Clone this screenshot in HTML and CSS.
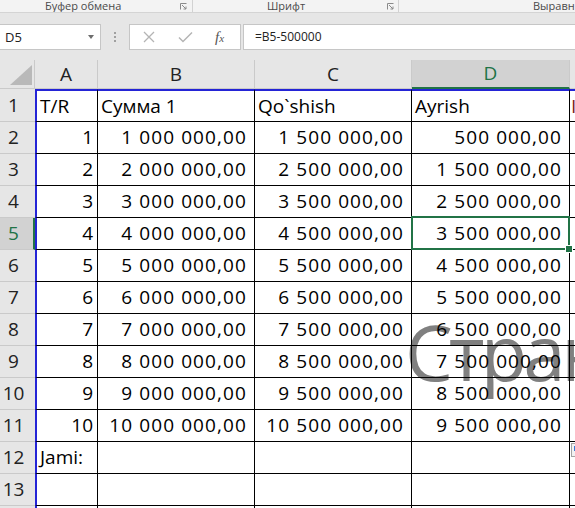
FILE: index.html
```html
<!DOCTYPE html>
<html lang="ru">
<head>
<meta charset="utf-8">
<title>Excel</title>
<link rel="stylesheet" href="styles.css">
</head>
<body>
<div class="ribbon">
  <div class="grp g1"><span class="lbl">Буфер обмена</span>
    <svg class="launch" viewBox="0 0 7 7"><path d="M0.5 6.5V0.5H6.5" fill="none" stroke="#8a8a8a" stroke-width="1"/><path d="M2 2L6 6M6 3.5V6H3.5" fill="none" stroke="#8a8a8a" stroke-width="1"/></svg>
  </div>
  <div class="grp g2"><span class="lbl">Шрифт</span>
    <svg class="launch" viewBox="0 0 7 7"><path d="M0.5 6.5V0.5H6.5" fill="none" stroke="#8a8a8a" stroke-width="1"/><path d="M2 2L6 6M6 3.5V6H3.5" fill="none" stroke="#8a8a8a" stroke-width="1"/></svg>
  </div>
  <div class="grp g3"><span class="lbl">Выравнивание</span></div>
</div>
<div class="fbar">
  <div class="namebox"><span>D5</span><span class="caret"></span></div>
  <div class="dots"><i></i><i></i><i></i></div>
  <div class="fxbox">
    <svg class="ic-x" viewBox="0 0 12 12"><path d="M1 1L11 11M11 1L1 11" stroke="#b4b4b4" stroke-width="1.3" fill="none"/></svg>
    <svg class="ic-ok" viewBox="0 0 15 12"><path d="M1 6.5L5 10.5L14 1.5" stroke="#b4b4b4" stroke-width="1.5" fill="none"/></svg>
    <span class="fx">f<small>x</small></span>
  </div>
  <div class="formula">=B5-500000</div>
</div>
<div class="sheet">
  <div class="watermark">Страница 1</div>
  <div class="paste"><i></i></div>
  <div class="grid">
    <div class="ch corner"><svg viewBox="0 0 35 28" width="35" height="28"><polygon points="10,25 32,25 32,5" fill="#b9b9b9"/></svg></div>
    <div class="ch">A</div><div class="ch">B</div><div class="ch">C</div><div class="ch sel">D</div><div class="ch last"></div>

    <div class="rh r1h">1</div><div class="c a r1">T/R</div><div class="c r1">Сумма 1</div><div class="c r1">Qo`shish</div><div class="c r1">Ayrish</div><div class="c e r1">Izoh</div>

    <div class="rh">2</div><div class="c a num">1</div><div class="c num">1 000 000,00</div><div class="c num">1 500 000,00</div><div class="c num">500 000,00</div><div class="c e"></div>
    <div class="rh">3</div><div class="c a num">2</div><div class="c num">2 000 000,00</div><div class="c num">2 500 000,00</div><div class="c num">1 500 000,00</div><div class="c e"></div>
    <div class="rh">4</div><div class="c a num">3</div><div class="c num">3 000 000,00</div><div class="c num">3 500 000,00</div><div class="c num">2 500 000,00</div><div class="c e"></div>
    <div class="rh rsel">5</div><div class="c a num">4</div><div class="c num">4 000 000,00</div><div class="c num">4 500 000,00</div><div class="c num active">3 500 000,00</div><div class="c e"></div>
    <div class="rh">6</div><div class="c a num">5</div><div class="c num">5 000 000,00</div><div class="c num">5 500 000,00</div><div class="c num">4 500 000,00</div><div class="c e"></div>
    <div class="rh">7</div><div class="c a num">6</div><div class="c num">6 000 000,00</div><div class="c num">6 500 000,00</div><div class="c num">5 500 000,00</div><div class="c e"></div>
    <div class="rh">8</div><div class="c a num">7</div><div class="c num">7 000 000,00</div><div class="c num">7 500 000,00</div><div class="c num">6 500 000,00</div><div class="c e"></div>
    <div class="rh">9</div><div class="c a num">8</div><div class="c num">8 000 000,00</div><div class="c num">8 500 000,00</div><div class="c num">7 500 000,00</div><div class="c e"></div>
    <div class="rh">10</div><div class="c a num">9</div><div class="c num">9 000 000,00</div><div class="c num">9 500 000,00</div><div class="c num">8 500 000,00</div><div class="c e"></div>
    <div class="rh">11</div><div class="c a num">10</div><div class="c num">10 000 000,00</div><div class="c num">10 500 000,00</div><div class="c num">9 500 000,00</div><div class="c e"></div>
    <div class="rh">12</div><div class="c a">Jami:</div><div class="c"></div><div class="c"></div><div class="c"></div><div class="c e"></div>
    <div class="rh">13</div><div class="c a"></div><div class="c"></div><div class="c"></div><div class="c"></div><div class="c e"></div>
    <div class="rh">14</div><div class="c a"></div><div class="c"></div><div class="c"></div><div class="c"></div><div class="c e"></div>
  </div>
</div>
</body>
</html>
```
FILE: styles.css
```css
* { box-sizing: border-box; margin: 0; padding: 0; }
html, body { width: 575px; height: 508px; overflow: hidden; }
body {
  margin: 0;
  background: #e6e6e6;
  font-family: "Open Sans", "Noto Sans", sans-serif;
  color: #000;
}

/* ribbon group labels */
.ribbon {
  display: flex;
  height: 13px;
  background: #f3f3f3;
  border-bottom: 1px solid #d4d4d4;
  font-size: 11px;
  line-height: 12px;
  color: #4a4a4a;
  white-space: nowrap;
  overflow: hidden;
}
.grp { display: flex; align-items: flex-start; height: 12px; border-right: 1px solid #d2d2d2; flex-shrink: 0; }
.g1 { width: 193px; padding-left: 45px; }
.g2 { width: 206px; padding-left: 74px; }
.g3 { flex: 1 1 auto; min-width: 0; overflow: hidden; padding-left: 134px; border-right: 0; }
.launch { width: 7px; height: 7px; margin-left: auto; margin-top: 3px; flex-shrink: 0; }
.g1 .launch { margin-right: 5px; }
.g2 .launch { margin-right: 4px; }

/* formula bar */
.fbar { display: flex; height: 47px; padding-top: 11px; }
.namebox {
  flex-shrink: 0;
  margin-left: -1px;
  width: 102px;
  height: 26px;
  background: #fff;
  border: 1px solid #c6c6c6;
  display: flex;
  align-items: center;
  padding-left: 5px;
  font-size: 13px;
  color: #222;
}
.caret {
  margin-left: auto;
  margin-right: 6px;
  border-left: 3.5px solid transparent;
  border-right: 3.5px solid transparent;
  border-top: 4px solid #6d6d6d;
}
.dots { flex-shrink: 0; width: 28px; height: 26px; display: flex; flex-direction: column; align-items: center; justify-content: center; gap: 2px; }
.dots i { display: block; width: 2px; height: 2px; background: #a0a0a0; }
.fxbox {
  flex-shrink: 0;
  width: 112px;
  height: 26px;
  background: #fff;
  border: 1px solid #c6c6c6;
  display: flex;
  align-items: center;
}
.ic-x { width: 12px; height: 12px; margin-left: 13px; }
.ic-ok { width: 15px; height: 12px; margin-left: 23px; }
.fx {
  margin-left: 22px;
  font-family: "Liberation Serif", "DejaVu Serif", serif;
  font-style: italic;
  font-size: 15px;
  color: #555;
  line-height: 1;
}
.fx small { font-size: 11px; }
.formula {
  flex: 1;
  margin-left: 2px;
  margin-right: -2px;
  height: 26px;
  background: #fff;
  border: 1px solid #c6c6c6;
  padding-left: 11px;
  font-size: 12px;
  line-height: 24px;
  color: #222;
}

/* sheet */
.sheet { position: relative; height: 448px; background: #fff; overflow: hidden; }
.watermark {
  position: absolute;
  z-index: 0;
  left: 405px;
  top: 254px;
  font-size: 76px;
  line-height: 1;
  letter-spacing: -4px;
  color: #808080;
  white-space: nowrap;
}
.paste {
  position: absolute;
  z-index: 3;
  left: 571px;
  top: 383px;
  width: 12px;
  height: 14px;
  border: 1px solid #a4a4a4;
  background: #f2f2f2;
}
.paste i { display: block; margin: 2px 0 0 2px; width: 4px; height: 5px; background: #3d7ad6; }

.grid {
  position: relative;
  z-index: 1;
  display: grid;
  grid-template-columns: 35px 63px 157px 157px 158px 1fr;
  grid-template-rows: 29px 33px repeat(13, 32px);
  font-size: 19px;
}
.ch {
  background: #e6e6e6;
  border-right: 1px solid #cacaca;
  border-bottom: 1px solid #cacaca;
  text-align: center;
  line-height: 28px;
  color: #222;
}
.ch.corner { line-height: 0; }
.ch.sel {
  background: #d2d2d2;
  color: #217346;
  border-bottom: 2px solid #217346;
  line-height: 27px;
}
.ch.last { border-right: 0; }

.rh {
  background: #e6e6e6;
  border-bottom: 1px solid #cacaca;
  text-align: center;
  padding-right: 8px;
  line-height: 31px;
  color: #222;
}
.rh.r1h { padding-top: 1px; line-height: 31px; }
.rh.rsel {
  background: #d2d2d2;
  color: #217346;
  border-right: 2px solid #217346;
  padding-right: 6px;
}

.c {
  border-right: 1px solid #000;
  border-bottom: 1px solid #000;
  line-height: 31px;
  padding: 0 3px;
  white-space: nowrap;
  overflow: hidden;
}
.c.r1 { border-top: 2px solid #2424d6; line-height: 30px; }
.c.a { border-left: 2px solid #2424d6; }
.c.num { text-align: right; padding-right: 7px; letter-spacing: 1.1px; }
.c.a.num { padding-right: 4px; letter-spacing: 0; }
.c.e { border-right: 0; padding: 0 0 0 1px; color: #7f1d1d; }
.c.active { position: relative; overflow: visible; }
.c.active::after {
  content: "";
  position: absolute;
  top: -2px;
  left: -1px;
  right: -1px;
  bottom: -1px;
  border: 2px solid #217346;
}
.c.active::before {
  content: "";
  position: absolute;
  z-index: 2;
  right: -4px;
  bottom: -4px;
  width: 6px;
  height: 6px;
  background: #217346;
  border: 1px solid #fff;
}
```
